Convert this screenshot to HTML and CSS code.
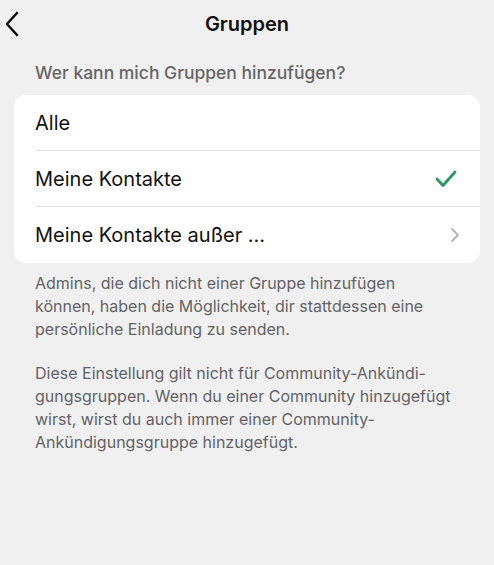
FILE: index.html
```html
<!DOCTYPE html>
<html lang="de">
<head>
    <meta charset="UTF-8">
    <meta name="viewport" content="width=device-width, initial-scale=1.0">
    <title>Gruppen</title>
    <link rel="stylesheet" href="styles.css">
</head>
<body>
    <!-- Top bar -->
    <div class="topbar">
        <a href="#" class="back">
            <svg width="16" height="26" viewBox="0 0 16 26">
                <path d="M13 2 L3 13 L13 24" fill="none" stroke="#111" stroke-width="2.6" stroke-linecap="round" stroke-linejoin="round"/>
            </svg>
        </a>
        <div class="title">Gruppen</div>
    </div>

    <!-- Options -->
    <div class="section-header">Wer kann mich Gruppen hinzufügen?</div>
    <div class="card">
        <div class="row">
            <span class="label">Alle</span>
        </div>
        <div class="row">
            <span class="label">Meine Kontakte</span>
            <svg class="check" width="22" height="18" viewBox="0 0 22 18">
                <path d="M2 9 L8 15.5 L20 2" fill="none" stroke="#2a9a5c" stroke-width="2.8" stroke-linecap="round" stroke-linejoin="round"/>
            </svg>
        </div>
        <div class="row">
            <span class="label">Meine Kontakte außer ...</span>
            <svg class="chevron" width="10" height="16" viewBox="0 0 10 16">
                <path d="M2 2 L8 8 L2 14" fill="none" stroke="#b4b4b8" stroke-width="2" stroke-linecap="round" stroke-linejoin="round"/>
            </svg>
        </div>
    </div>

    <!-- Footer notes -->
    <div class="footer">
        <p>Admins, die dich nicht einer Gruppe hinzufügen<br>können, haben die Möglichkeit, dir stattdessen eine<br>persönliche Einladung zu senden.</p>
        <p>Diese Einstellung gilt nicht für Community-Ankündi-<br>gungsgruppen. Wenn du einer Community hinzugefügt<br>wirst, wirst du auch immer einer Community-<br>Ankündigungsgruppe hinzugefügt.</p>
    </div>
</body>
</html>
```

FILE: styles.css
```css
/* General */
body {
    font-family: Inter, 'Noto Sans', sans-serif;
    margin: 0;
    padding: 0;
    background: #f0f0f0;
    color: #111;
    height: 565px;
}

/* Top bar */
.topbar {
    position: relative;
    height: 48px;
    display: flex;
    align-items: center;
    justify-content: center;
}

.back {
    position: absolute;
    left: 4px;
    top: 11px;
    display: flex;
}

.title {
    font-size: 20px;
    font-weight: 600;
    letter-spacing: 0;
}

/* Section */
.section-header {
    margin-top: 14px;
    padding-left: 35px;
    font-size: 17.5px;
    font-weight: 500;
    color: #666;
    line-height: 22px;
}

.card {
    margin: 11px 14px 0 14px;
    background: #fff;
    border-radius: 12px;
    overflow: hidden;
}

.row {
    height: 56px;
    margin-left: 21px;
    padding-right: 24px;
    display: flex;
    align-items: center;
    justify-content: space-between;
    border-bottom: 1px solid #e2e2e4;
    box-sizing: border-box;
}

.row:last-child {
    border-bottom: none;
}

.label {
    font-size: 20px;
    letter-spacing: 0;
}

.check {
    margin-right: -1px;
}

.chevron {
    margin-right: -4px;
}

/* Footer */
.footer {
    padding: 9px 20px 0 35px;
    color: #636366;
    font-size: 16px;
    line-height: 23px;
}

.footer p {
    margin: 0 0 21px 0;
    white-space: nowrap;
}
```
